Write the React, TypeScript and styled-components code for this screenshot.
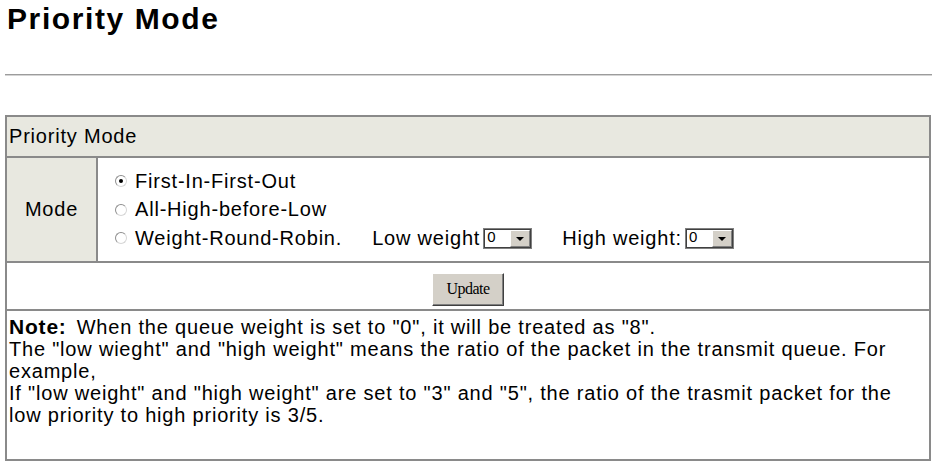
import React from "react";
import styled, { createGlobalStyle } from "styled-components";

const GlobalStyle = createGlobalStyle`
  html, body { margin: 0; padding: 0; background: #fff; }
  body { font-family: "Liberation Sans", Arial, sans-serif; color: #000; }
`;

const Page = styled.div`
  padding: 0 0 0 5px;
  width: 931px;
`;

const Title = styled.h1`
  margin: 0;
  padding: 2px 0 0 2px;
  font-size: 30px;
  line-height: 34px;
  font-weight: bold;
  letter-spacing: 1.6px;
`;

const Rule = styled.div`
  margin-top: 38px;
  width: 927px;
  height: 0;
  border-top: 1px solid #9c9c9c;
  border-bottom: 1px solid #d4d4d4;
`;

const Panel = styled.div`
  margin-top: 39px;
  width: 926px;
  box-sizing: border-box;
  border: 2px solid #8a8a8a;
  font-size: 20px;
  letter-spacing: 0.8px;
`;

const HeaderRow = styled.div`
  height: 39px;
  display: flex;
  align-items: center;
  padding-left: 2px;
  background: #e8e8e0;
  border-bottom: 2px solid #8a8a8a;
`;

const ModeRow = styled.div`
  display: grid;
  grid-template-columns: 91px 1fr;
  height: 103px;
  border-bottom: 2px solid #8a8a8a;
`;

const Label = styled.div`
  display: flex;
  align-items: center;
  justify-content: center;
  background: #e8e8e0;
  border-right: 2px solid #8a8a8a;
`;

const Options = styled.div`
  display: flex;
  flex-direction: column;
  justify-content: center;
  padding-left: 17px;
`;

const OptionLine = styled.div`
  display: flex;
  align-items: center;
  height: 28.5px;
  white-space: pre;
`;

const Radio = styled.span<{ $checked?: boolean }>`
  display: inline-flex;
  align-items: center;
  justify-content: center;
  box-sizing: border-box;
  width: 12px;
  height: 12px;
  margin-right: 8px;
  border-radius: 50%;
  border: 1px solid #8e8e8e;
  border-right-color: #d6d6d6;
  border-bottom-color: #d6d6d6;
  background: #fff;
  &::after {
    content: "";
    display: ${(p) => (p.$checked ? "block" : "none")};
    width: 4px;
    height: 4px;
    border-radius: 50%;
    background: #000;
  }
`;

const WeightLabel = styled.span<{ $gap: number }>`
  margin-left: ${(p) => p.$gap}px;
  margin-right: 3px;
`;

const Select = styled.span`
  display: inline-flex;
  box-sizing: border-box;
  width: 49px;
  height: 21px;
  border: 1px solid #808080;
  box-shadow: inset 1px 1px 0 #404040, inset -1px -1px 0 #404040;
  padding: 1px;
  background: #fff;
  letter-spacing: 0;
`;

const SelectValue = styled.span`
  flex: 1;
  font-size: 15px;
  line-height: 14px;
  padding-left: 2px;
  color: #000;
`;

const SelectArrow = styled.span`
  width: 20px;
  display: flex;
  align-items: center;
  justify-content: center;
  background: #d4d0c8;
  box-sizing: border-box;
  border-left: 1px solid #fff;
  border-top: 1px solid #fff;
  border-right: 1px solid #808080;
  border-bottom: 1px solid #808080;
  &::after {
    content: "";
    width: 0;
    height: 0;
    border-left: 4px solid transparent;
    border-right: 4px solid transparent;
    border-top: 4px solid #000;
    margin-top: 1px;
  }
`;

const ButtonRow = styled.div`
  height: 48px;
  display: flex;
  align-items: center;
  justify-content: center;
  padding-top: 6px;
  box-sizing: border-box;
  border-bottom: 2px solid #8a8a8a;
`;

const Button = styled.button`
  width: 72px;
  height: 33px;
  margin: 0;
  padding: 0;
  background: #d4d0c8;
  font-family: "Liberation Serif", "Times New Roman", serif;
  font-size: 16px;
  letter-spacing: -0.5px;
  color: #000;
  border: 1px solid;
  border-color: #ffffff #404040 #404040 #ffffff;
  box-shadow: inset -1px -1px 0 #808080;
`;

const NoteCell = styled.div`
  height: 148px;
  box-sizing: border-box;
  padding: 5px 2px 0 2px;
  line-height: 22px;
`;

const NoteTag = styled.b`
  font-size: 21px;
  margin-right: 10px;
`;

function WeightSelect({ value }: { value: string }) {
  return (
    <Select>
      <SelectValue>{value}</SelectValue>
      <SelectArrow />
    </Select>
  );
}

export default function App() {
  return (
    <>
      <GlobalStyle />
      <Page>
        <Title>Priority Mode</Title>
        <Rule />
        <Panel>
          <HeaderRow>Priority Mode</HeaderRow>
          <ModeRow>
            <Label>Mode</Label>
            <Options>
              <OptionLine>
                <Radio $checked />
                First-In-First-Out
              </OptionLine>
              <OptionLine>
                <Radio />
                All-High-before-Low
              </OptionLine>
              <OptionLine>
                <Radio />
                Weight-Round-Robin.
                <WeightLabel $gap={30}>Low weight</WeightLabel>
                <WeightSelect value="0" />
                <WeightLabel $gap={30}>High weight:</WeightLabel>
                <WeightSelect value="0" />
              </OptionLine>
            </Options>
          </ModeRow>
          <ButtonRow>
            <Button type="button">Update</Button>
          </ButtonRow>
          <NoteCell>
            <NoteTag>Note:</NoteTag>
            When the queue weight is set to "0", it will be treated as "8".
            <br />
            The "low wieght" and "high weight" means the ratio of the packet in the transmit queue. For example,
            <br />
            If "low weight" and "high weight" are set to "3" and "5", the ratio of the trasmit packet for the low
            priority to high priority is 3/5.
          </NoteCell>
        </Panel>
      </Page>
    </>
  );
}
